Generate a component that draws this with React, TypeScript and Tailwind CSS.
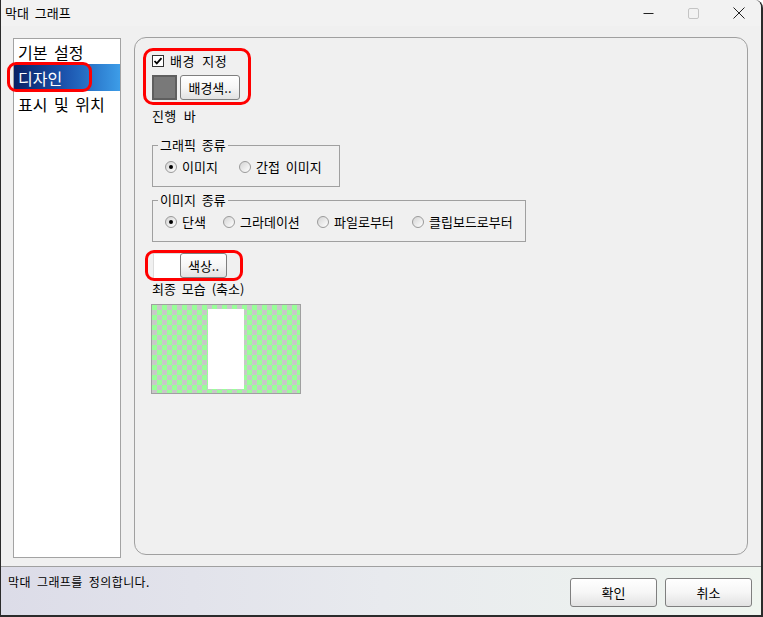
import React from "react";

const FONT = "[font-family:'Noto_Sans_CJK_KR','Noto_Sans',sans-serif]";

function Radio({ checked, label, w }: { checked?: boolean; label: string; w: string }) {
  return (
    <div className={`flex items-center gap-[5px] ${w}`}>
      <span className="w-[12px] h-[12px] rounded-full border border-[#9a9a9a] bg-gradient-to-br from-[#d4d4d4] to-white flex items-center justify-center shrink-0">
        {checked && <span className="w-[4px] h-[4px] rounded-full bg-black" />}
      </span>
      <span className="text-[13px] leading-[16px] text-black whitespace-nowrap [word-spacing:3px]">{label}</span>
    </div>
  );
}

function Btn({ label, w, h }: { label: string; w: string; h: string }) {
  return (
    <div
      className={`${w} ${h} flex items-center justify-center rounded-[3px] border border-[#7f7f7f] bg-gradient-to-b from-white via-[#f6f6f6] to-[#e2e2e2] text-[13px] leading-[16px] text-black`}
    >
      {label}
    </div>
  );
}

export default function App() {
  return (
    <div
      className={`${FONT} relative w-[763px] h-[617px] bg-[#f0f0f0] flex flex-col border-l border-r-2 border-b-2 border-[#2b2b2b] rounded-tr-[8px] overflow-hidden text-black`}
    >
      {/* title bar */}
      <div className="h-[26px] flex items-center justify-between bg-[#f2f2f2]">
        <span className="pl-[4px] text-[13px] leading-[16px] [word-spacing:3px]">막대 그래프</span>
        <div className="flex h-full">
          <div className="w-[45px] h-full flex items-center justify-center">
            <svg width="11" height="11" viewBox="0 0 11 11">
              <path d="M0.5 5.5h10" stroke="#222" strokeWidth="1" />
            </svg>
          </div>
          <div className="w-[45px] h-full flex items-center justify-center">
            <svg width="11" height="11" viewBox="0 0 11 11">
              <rect x="0.5" y="0.5" width="10" height="10" rx="1.5" fill="none" stroke="#c4c4c4" strokeWidth="1" />
            </svg>
          </div>
          <div className="w-[45px] h-full flex items-center justify-center">
            <svg width="12" height="12" viewBox="0 0 12 12">
              <path d="M0.5 0.5l11 11M11.5 0.5l-11 11" stroke="#222" strokeWidth="1" />
            </svg>
          </div>
        </div>
      </div>

      {/* body */}
      <div className="flex-1 flex items-start pl-[12px] pt-[11px] pr-[13px] gap-[13px]">
        {/* list */}
        <div className="w-[108px] h-[520px] mt-[1px] bg-white border border-[#a3a3a3] flex flex-col">
          <div className="h-[25px] flex items-center pl-[4px] text-[16px] leading-[20px] [word-spacing:3px]">기본 설정</div>
          <div className="h-[27px] flex items-center pl-[4px] text-[16px] leading-[20px] text-white bg-gradient-to-r from-[#0a2266] via-[#1d56b0] to-[#3d9de8]">
            디자인
          </div>
          <div className="h-[26px] flex items-center pl-[4px] text-[16px] leading-[20px] [word-spacing:3px]">표시 및 위치</div>
        </div>

        {/* panel */}
        <div className="flex-1 h-[518px] border border-[#a0a0a0] rounded-[12px] pl-[17px] pt-[15px] flex flex-col items-start">
          <div className="h-[16px] flex items-center gap-[6px]">
            <svg width="12" height="12" viewBox="0 0 12 12">
              <rect x="0.5" y="0.5" width="11" height="11" fill="white" stroke="#333" strokeWidth="1" />
              <path d="M2.5 6l2.3 2.4L9.5 3.2" fill="none" stroke="#000" strokeWidth="1.8" />
            </svg>
            <span className="text-[13px] leading-[16px] [word-spacing:4px] tracking-[0.5px]">배경 지정</span>
          </div>
          <div className="mt-[6px] flex items-start gap-[3px]">
            <div className="w-[25px] h-[25px] border-2 border-[#5f5f5f] bg-[#797979]" />
            <Btn label="배경색.." w="w-[60px]" h="h-[25px]" />
          </div>
          <div className="mt-[7px] h-[18px] leading-[18px] text-[13px] [word-spacing:4px] tracking-[0.3px]">진행 바</div>

          {/* group 1 */}
          <div className="relative mt-[20px] w-[188px] h-[42px] border border-[#a0a0a0] flex items-center pl-[12px] pt-[2px]">
            <span className="absolute -top-[9px] left-[5px] px-[2px] bg-[#f0f0f0] text-[13px] leading-[16px] [word-spacing:3px]">
              그래픽 종류
            </span>
            <Radio checked label="이미지" w="w-[74px]" />
            <Radio label="간접 이미지" w="w-[90px]" />
          </div>

          {/* group 2 */}
          <div className="relative mt-[13px] w-[374px] h-[42px] border border-[#a0a0a0] flex items-center pl-[12px] pt-[2px]">
            <span className="absolute -top-[9px] left-[5px] px-[2px] bg-[#f0f0f0] text-[13px] leading-[16px] [word-spacing:3px]">
              이미지 종류
            </span>
            <Radio checked label="단색" w="w-[58px]" />
            <Radio label="그라데이션" w="w-[94px]" />
            <Radio label="파일로부터" w="w-[95px]" />
            <Radio label="클립보드로부터" w="w-[100px]" />
          </div>

          <div className="mt-[11px] ml-[1px] flex items-start">
            <div className="w-[27px] h-[25px] bg-white border-l border-t border-[#dcdcdc]" />
            <Btn label="색상.." w="w-[47px]" h="h-[25px]" />
          </div>
          <div className="mt-[2px] h-[18px] leading-[18px] text-[13px] [word-spacing:3px]">최종 모습 (축소)</div>

          <div className="mt-[6px] -ml-[1px] w-[150px] h-[90px] border border-[#a0a0a0] [background:repeating-conic-gradient(#c8c8c8_0_25%,#99ff99_0_50%)_0_0/10px_10px] flex items-start">
            <div className="ml-[56px] mt-[4px] w-[36px] h-[80px] bg-white" />
          </div>
        </div>
      </div>

      {/* footer */}
      <div className="h-[49px] border-t border-[#a0a0a0] bg-gradient-to-r from-[#dcdce8] via-[#e8eaee] to-[#eff5ef] flex items-start justify-between">
        <span className="pl-[7px] pt-[7px] text-[12px] leading-[16px] [word-spacing:3px] tracking-[0.4px]">막대 그래프를 정의합니다.</span>
        <div className="flex gap-[8px] pt-[11px] pr-[9px]">
          <Btn label="확인" w="w-[87px]" h="h-[29px]" />
          <Btn label="취소" w="w-[87px]" h="h-[29px]" />
        </div>
      </div>

      {/* red highlight overlays */}
      <div className="absolute left-[6px] top-[62px] w-[85px] h-[30px] border-[3px] border-[#ff0000] rounded-[9px]" />
      <div className="absolute left-[142px] top-[48px] w-[108px] h-[57px] border-[3px] border-[#ff0000] rounded-[10px]" />
      <div className="absolute left-[144px] top-[250px] w-[98px] h-[31px] border-[3px] border-[#ff0000] rounded-[9px]" />
    </div>
  );
}
